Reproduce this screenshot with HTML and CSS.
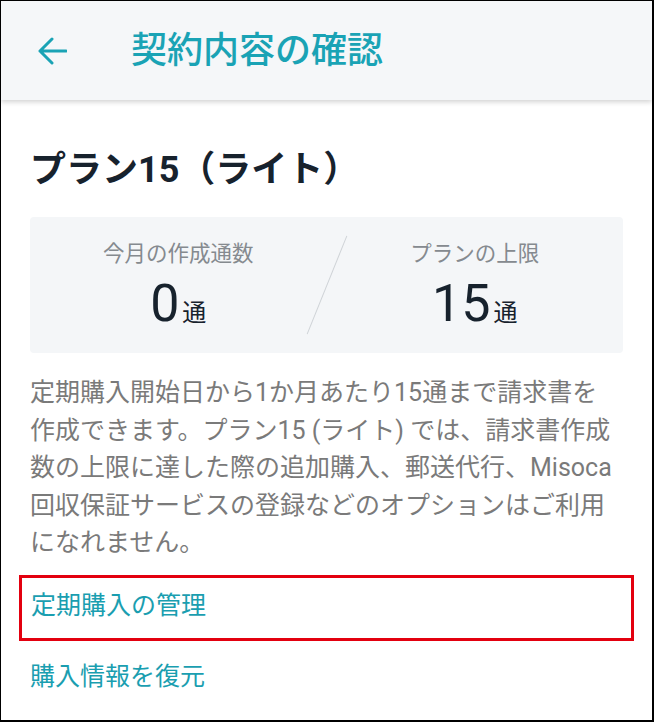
FILE: index.html
```html
<!DOCTYPE html>
<html lang="ja">
<head>
    <meta charset="UTF-8">
    <meta name="viewport" content="width=device-width, initial-scale=1.0">
    <title>契約内容の確認</title>
    <link rel="stylesheet" href="styles.css">
</head>
<body>
    <div class="screen">
        <header class="app-bar">
            <button class="back-btn" aria-label="戻る">
                <svg width="30" height="28" viewBox="0 0 30 28">
                    <path d="M29 14 H3 M15 2 L3 14 L15 26" fill="none" stroke="currentColor" stroke-width="3" stroke-linecap="round" stroke-linejoin="round"/>
                </svg>
            </button>
            <h1 class="app-title">契約内容の確認</h1>
        </header>

        <main class="content">
            <h2 class="plan-name">プラン15（ライト）</h2>

            <div class="usage-box">
                <div class="usage-item">
                    <div class="usage-label">今月の作成通数</div>
                    <div class="usage-value">0<span class="unit">通</span></div>
                </div>
                <div class="usage-item">
                    <div class="usage-label">プランの上限</div>
                    <div class="usage-value">15<span class="unit">通</span></div>
                </div>
            </div>

            <p class="plan-note">定期購入開始日から1か月あたり15通まで請求書を作成できます。プラン15 (ライト) では、請求書作成数の上限に達した際の追加購入、郵送代行、Misoca回収保証サービスの登録などのオプションはご利用になれません。</p>

            <div class="link-row highlight">
                <a href="#" class="text-link">定期購入の管理</a>
            </div>
            <div class="link-row">
                <a href="#" class="text-link">購入情報を復元</a>
            </div>
        </main>
    </div>
</body>
</html>
```

FILE: styles.css
```css
body {
    margin: 0;
    padding: 0;
    font-family: Roboto, 'Noto Sans CJK JP', sans-serif;
    background: white;
}

.screen {
    width: 654px;
    height: 722px;
    box-sizing: border-box;
    border: 1px solid #000;
    border-bottom-width: 2px;
    border-right-width: 2px;
    overflow: hidden;
    background: white;
}

.app-bar {
    height: 99px;
    background: #f5f7f9;
    display: flex;
    align-items: center;
    padding-left: 36px;
    box-shadow: 0 2px 5px rgba(0,0,0,0.18);
    position: relative;
}

.back-btn {
    background: none;
    border: none;
    padding: 0;
    margin: 1px 0 0 0;
    color: #1aa3b5;
    display: flex;
    cursor: pointer;
}

.app-title {
    margin: 0 0 0 64px;
    font-size: 36px;
    font-weight: 500;
    color: #1aa3b5;
    line-height: 1;
}

.content {
    padding: 0 29px;
}

.plan-name {
    margin: 46px 0 0 0;
    font-size: 36px;
    line-height: 48px;
    font-weight: bold;
    color: #17222d;
}

.usage-box {
    margin-top: 23px;
    background: #f4f6f8;
    border-radius: 4px;
    display: flex;
    padding: 22px 0 21px;
    position: relative;
}

.usage-box::before {
    content: '';
    position: absolute;
    left: 50%;
    top: 50%;
    width: 1px;
    height: 106px;
    background: #cfd3d7;
    transform: translate(-50%, -50%) rotate(22deg);
}

.usage-item {
    flex: 1;
    text-align: center;
}

.usage-label {
    font-size: 21.5px;
    line-height: 30px;
    color: #858a8f;
}

.usage-value {
    margin-top: 7px;
    font-size: 52px;
    line-height: 56px;
    height: 56px;
    color: #17222d;
}

.unit {
    font-size: 24px;
    line-height: 1;
    margin-left: 3px;
}

.plan-note {
    margin: 21px 4px 0 0;
    font-size: 25px;
    line-height: 37.5px;
    color: #7a7a7a;
}

.link-row {
    line-height: 38px;
}

.highlight {
    margin: 13px 0 0 -11px;
    border: 3px solid #e3000f;
    padding: 9px 0 10px 9px;
    width: 600px;
}

.link-row + .link-row {
    margin-top: 17px;
}

.text-link {
    font-size: 25px;
    color: #1a9eb0;
    text-decoration: none;
}
```
